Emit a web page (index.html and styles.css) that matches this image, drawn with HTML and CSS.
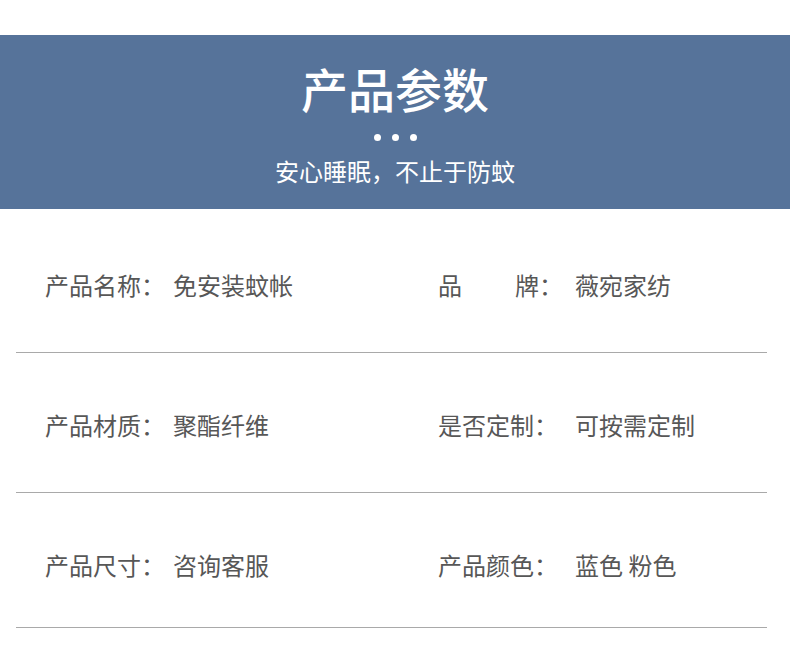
FILE: index.html
```html
<!DOCTYPE html>
<html lang="zh">
<head>
<meta charset="utf-8">
<link rel="stylesheet" href="styles.css">
</head>
<body>
<div class="page">
  <header class="band">
    <h1 class="title">产品参数</h1>
    <div class="dots"><span></span><span></span><span></span></div>
    <p class="subtitle">安心睡眠，不止于防蚊</p>
  </header>
  <section class="params">
    <div class="row">
      <div class="cell left"><span class="label">产品名称：</span><span class="value">免安装蚊帐</span></div>
      <div class="cell right"><span class="label"><span class="spread"><span>品</span><span>牌</span></span>：</span><span class="value">薇宛家纺</span></div>
    </div>
    <div class="row">
      <div class="cell left"><span class="label">产品材质：</span><span class="value">聚酯纤维</span></div>
      <div class="cell right"><span class="label">是否定制：</span><span class="value">可按需定制</span></div>
    </div>
    <div class="row last">
      <div class="cell left"><span class="label">产品尺寸：</span><span class="value">咨询客服</span></div>
      <div class="cell right"><span class="label">产品颜色：</span><span class="value">蓝色 粉色</span></div>
    </div>
  </section>
</div>
</body>
</html>
```

FILE: styles.css
```css
* { box-sizing: border-box; }
html, body {
  margin: 0;
  padding: 0;
  background: #ffffff;
}
body {
  font-family: "Noto Sans CJK SC", "Noto Sans", sans-serif;
}
.page {
  width: 790px;
  padding-top: 35px;
}
.band {
  height: 174px;
  background: #56739a;
  color: #ffffff;
  display: flex;
  flex-direction: column;
  align-items: center;
  padding-top: 25px;
}
.title {
  margin: 0;
  font-size: 47px;
  line-height: 56px;
  font-weight: 500;
  letter-spacing: 0;
}
.dots {
  display: flex;
  gap: 11px;
  margin-top: 18px;
  height: 7px;
}
.dots span {
  width: 7px;
  height: 7px;
  border-radius: 50%;
  background: #ffffff;
}
.subtitle {
  margin: 15px 0 0;
  font-size: 24px;
  line-height: 30px;
}
.params {
  padding: 0 23px 0 16px;
}
.row {
  display: grid;
  grid-template-columns: 393px 1fr;
  padding: 57px 0 52px 29px;
  border-bottom: 1px solid #a9a9a9;
  font-size: 24px;
  line-height: 30px;
  color: #575757;
}
.row:first-child {
  padding-top: 61px;
}
.row.last {
  padding-bottom: 47px;
}
.cell {
  display: flex;
  white-space: nowrap;
}
.left .label {
  width: 128px;
}
.right .label {
  width: 137px;
  display: flex;
}
.spread {
  display: flex;
  justify-content: space-between;
  width: 101px;
}
```
